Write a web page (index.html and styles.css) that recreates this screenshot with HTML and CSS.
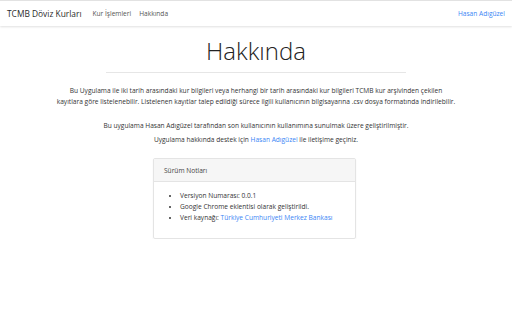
FILE: index.html
```html
<!DOCTYPE html>
<html lang="tr">
<head>
<meta charset="utf-8">
<title>Hakkında</title>
<link rel="stylesheet" href="styles.css">
</head>
<body>
<nav class="navbar">
  <div class="nav-left">
    <a class="brand" href="#">TCMB Döviz Kurları</a>
    <a class="nav-link" href="#">Kur İşlemleri</a>
    <a class="nav-link" href="#">Hakkında</a>
  </div>
  <a class="nav-user" href="#">Hasan Adıgüzel</a>
</nav>
<main class="content">
  <h1 class="title">Hakkında</h1>
  <hr class="rule">
  <p class="lead-text">Bu Uygulama ile iki tarih arasındaki kur bilgileri veya herhangi bir tarih arasındaki kur bilgileri TCMB kur arşivinden çekilen<br>kayıtlara göre listelenebilir. Listelenen kayıtlar talep edildiği sürece ilgili kullanıcının bilgisayarına .csv dosya formatında indirilebilir.</p>
  <p class="author-text">Bu uygulama Hasan Adıgüzel tarafından son kullanıcının kullanımına sunulmak üzere geliştirilmiştir.<br>Uygulama hakkında destek için <a href="#" class="link">Hasan Adıgüzel</a> ile iletişime geçiniz.</p>
  <section class="card">
    <div class="card-header">Sürüm Notları</div>
    <div class="card-body">
      <ul class="notes">
        <li>Versiyon Numarası: 0.0.1</li>
        <li>Google Chrome eklentisi olarak geliştirildi.</li>
        <li>Veri kaynağı: <a href="#" class="link">Türkiye Cumhuriyeti Merkez Bankası</a></li>
      </ul>
    </div>
  </section>
</main>
</body>
</html>
```
FILE: styles.css
```css
html, body {
  margin: 0;
  padding: 0;
  background: #fff;
}
body {
  font-family: "Open Sans", "Noto Sans", sans-serif;
  color: #333;
  border-top: 1px solid #e2e2e2;
}
a { text-decoration: none; }
.navbar {
  height: 25px;
  display: flex;
  align-items: center;
  justify-content: space-between;
  padding: 0 7px 0 7px;
  background: #fff;
  box-shadow: 0 1px 2px rgba(0,0,0,0.12);
  position: relative;
}
.nav-left {
  display: flex;
  align-items: center;
}
.brand {
  font-size: 8.4px;
  color: #2a2a2a;
  margin-right: 11px;
}
.nav-link {
  font-size: 6.6px;
  color: #555;
  margin-right: 8px;
}
.nav-user {
  font-size: 6.6px;
  color: #3a86f5;
}
.content {
  display: flex;
  flex-direction: column;
  align-items: center;
}
.title {
  font-size: 24px;
  font-weight: 300;
  margin: 10px 0 0 0;
  line-height: 30px;
  color: #222;
}
.rule {
  width: 300px;
  border: 0;
  border-top: 1px solid #e6e6e6;
  margin: 6px 0 13px 0;
}
.lead-text, .author-text {
  font-size: 6.6px;
  text-align: center;
  margin: 0;
}
.lead-text {
  line-height: 10.5px;
}
.author-text {
  margin-top: 12px;
  line-height: 13.5px;
}
.link { color: #3a86f5; }
.card {
  width: 201px;
  margin-top: 12px;
  margin-right: 3px;
  border: 1px solid #e4e4e4;
  border-radius: 2px;
  box-shadow: 0 1px 2px rgba(0,0,0,0.06);
}
.card-header {
  background: #f6f6f6;
  border-bottom: 1px solid #e4e4e4;
  height: 22px;
  display: flex;
  align-items: center;
  padding-left: 10px;
  font-size: 6.6px;
  color: #444;
}
.card-body {
  padding: 9px 10px 15px 10px;
}
.notes {
  margin: 0;
  padding-left: 16px;
  font-size: 6.6px;
  line-height: 10.8px;
  color: #333;
}
```
